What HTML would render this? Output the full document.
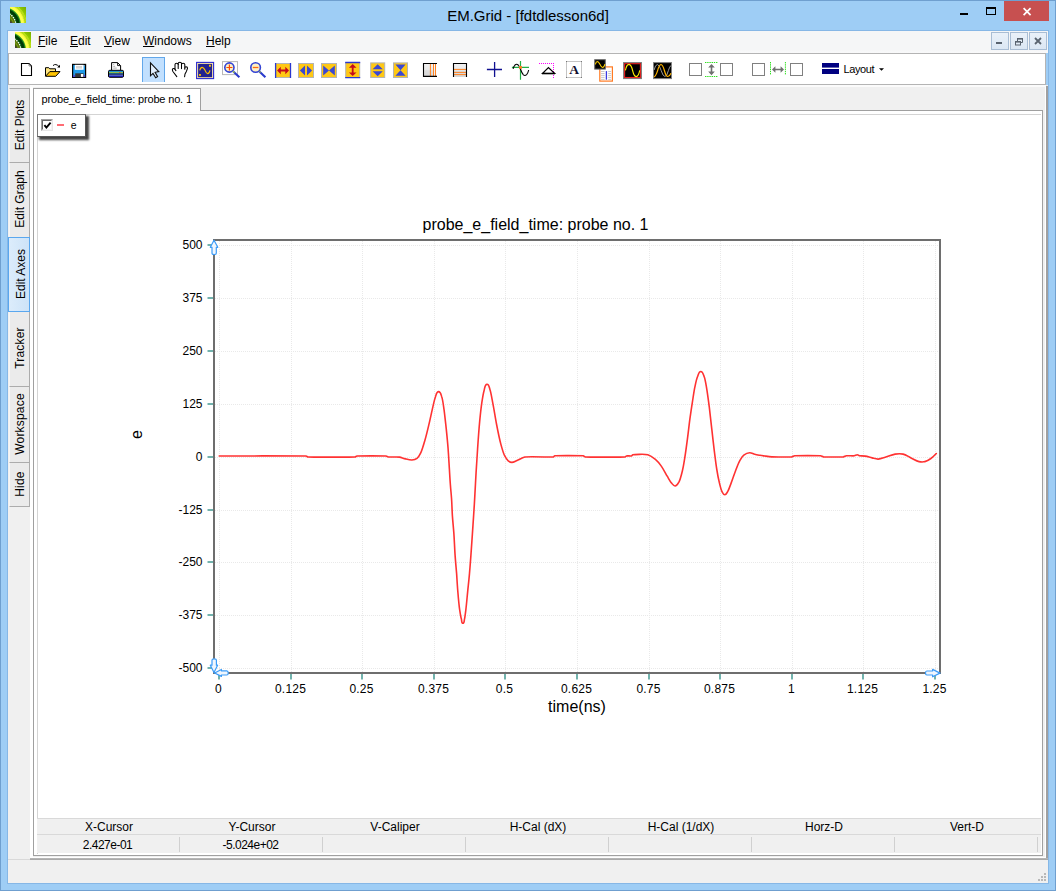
<!DOCTYPE html>
<html>
<head>
<meta charset="utf-8">
<title>EM.Grid - [fdtdlesson6d]</title>
<style>
html,body{margin:0;padding:0;}
body{width:1056px;height:891px;overflow:hidden;background:#9ecdf5;font-family:"Liberation Sans",sans-serif;position:relative;color:#000;}
.abs{position:absolute;}
#frame{position:absolute;left:0;top:0;width:1054px;height:889px;border:1px solid #6f9fcf;}
#title{position:absolute;left:0;top:6px;width:1056px;text-align:center;font-size:15px;line-height:20px;color:#000;}
#menubar{position:absolute;left:8px;top:31px;width:1040px;height:22px;background:linear-gradient(#f5f6f7 0%,#f5f6f7 85%,#f9f9fa 100%);}
.menu{position:absolute;top:34px;font-size:12px;line-height:15px;}
.menu u{text-decoration:underline;text-underline-offset:1px;}
#toolbar{position:absolute;left:8px;top:53px;width:1036px;height:30px;background:#fff;border:1px solid #b4b4b4;}
#client{position:absolute;left:8px;top:85px;width:1040px;height:774px;background:#f0f0f0;}
#status{position:absolute;left:8px;top:859px;width:1040px;height:24px;background:#f0f0f0;}
.vtab{position:absolute;left:9px;width:19px;border:1px solid #acacac;border-left-color:#f6f6f6;background:#ebebeb;}
.vtab span{position:absolute;left:50%;top:50%;transform:translate(-50%,-50%) translateY(-1px) rotate(-90deg);white-space:nowrap;font-size:12px;line-height:12px;letter-spacing:0;}
.vtab.sel{left:8px;width:20px;background:linear-gradient(90deg,#dcecfb,#cde3f8);border-color:#5aa7ee;z-index:3}
.vtab.sel span{margin-left:2px}
.hd,.vl{width:140px;text-align:center;font-size:12px;line-height:15px;white-space:nowrap}
.vl{letter-spacing:-0.5px;margin-top:1px}
.mdib{top:32px;width:18px;height:18px;box-sizing:border-box;border:1px solid #a9bdd4;background:linear-gradient(#eaf1f9,#dbe7f4)}
</style>
</head>
<body>
<div id="frame"></div>
<div class="abs" style="left:7px;top:30px;width:1040px;height:852px;border:1px solid #86b7e6"></div>
<div id="title">EM.Grid - [fdtdlesson6d]</div>


<!-- menu bar -->
<div id="menubar"></div>
<div class="menu" style="left:38px"><u>F</u>ile</div>
<div class="menu" style="left:70px"><u>E</u>dit</div>
<div class="menu" style="left:104px"><u>V</u>iew</div>
<div class="menu" style="left:143px"><u>W</u>indows</div>
<div class="menu" style="left:206px"><u>H</u>elp</div>


<!-- window controls -->
<div class="abs" style="left:1004px;top:1px;width:45px;height:20px;background:#c75050"></div>
<svg class="abs" style="left:1004px;top:1px" width="45" height="20" viewBox="0 0 45 20"><path d="M19.6,7.2 L26.6,14.2 M26.6,7.2 L19.6,14.2" stroke="#fff" stroke-width="1.7" fill="none"/></svg>
<div class="abs" style="left:986px;top:7px;width:10px;height:8px;box-sizing:border-box;border:1px solid #000;border-top-width:2px"></div>
<div class="abs" style="left:960px;top:13px;width:8px;height:2px;background:#000"></div>
<!-- mdi buttons -->
<div class="abs mdib" style="left:991px"></div>
<div class="abs mdib" style="left:1010px"></div>
<div class="abs mdib" style="left:1029px"></div>
<svg class="abs" style="left:991px;top:32px" width="56" height="18" viewBox="0 0 56 18">
<rect x="5" y="10" width="6" height="2" fill="#5a6470"/>
<path d="M26.5,9 V6.5 H31.5 V10.5 H29.5" fill="none" stroke="#5a6470" stroke-width="1"/><rect x="26" y="6" width="6" height="1.6" fill="#5a6470"/>
<rect x="24.5" y="9.5" width="5" height="3.5" fill="none" stroke="#5a6470" stroke-width="1"/><rect x="24" y="9" width="6" height="1.6" fill="#5a6470"/>
<path d="M44,6 L50,12 M50,6 L44,12" stroke="#5a6470" stroke-width="1.8" fill="none"/>
</svg>
<!-- size grip -->
<svg class="abs" style="left:1036px;top:871px;z-index:5" width="12" height="12" viewBox="0 0 12 12" shape-rendering="crispEdges" fill="#b8b8b8">
<rect x="8" y="2" width="2" height="2"/><rect x="5" y="5" width="2" height="2"/><rect x="8" y="5" width="2" height="2"/>
<rect x="2" y="8" width="2" height="2"/><rect x="5" y="8" width="2" height="2"/><rect x="8" y="8" width="2" height="2"/></svg>
<!-- app logos -->
<svg width="0" height="0" style="position:absolute"><defs>
<linearGradient id="lgBg" x1="0" y1="1" x2="1" y2="0"><stop offset="0" stop-color="#a8dc00"/><stop offset="0.7" stop-color="#98d000"/><stop offset="1" stop-color="#74ac00"/></linearGradient>
<clipPath id="lgClip"><rect x="0" y="0" width="16" height="16"/></clipPath>
<g id="logo" clip-path="url(#lgClip)">
<rect width="16" height="16" fill="url(#lgBg)"/>
<g fill="none" transform="translate(-7.1,18)">
<circle r="22.7" stroke="#c2ea18" stroke-width="2.2"/>
<circle r="19.8" stroke="#f2fc38" stroke-width="4.1"/>
<circle r="19.5" stroke="#ffff50" stroke-width="2.2"/>
<circle r="21.9" stroke="#98ac1c" stroke-width="0.45" stroke-dasharray="1.2,0.6"/>
<circle r="22.9" stroke="#90a818" stroke-width="0.45" stroke-dasharray="1.2,0.6"/>
<circle r="17.3" stroke="#2e9a2c" stroke-width="1.3"/>
<circle r="14.9" stroke="#075c10" stroke-width="4.4"/>
<circle r="15.4" stroke="#003a06" stroke-width="2.2"/>
<circle r="12.9" fill="#587808" stroke="none"/>
<circle r="10.6" stroke="#86a41e" stroke-width="0.8"/>
<circle r="8.4" stroke="#405e06" stroke-width="1.6"/>
<circle r="12.9" stroke="#fff" stroke-width="1.2" stroke-dasharray="1.4,1"/>
</g>
<rect x="0" y="14.7" width="2.2" height="1.3" fill="#483c44"/>
</g></defs></svg>
<svg class="abs" style="left:10px;top:7px" width="16" height="16" viewBox="0 0 16 16"><use href="#logo"/></svg>
<svg class="abs" style="left:15px;top:32px" width="16" height="16" viewBox="0 0 16 16"><use href="#logo"/></svg>
<!-- toolbar -->
<div id="toolbar"></div>

<!-- toolbar icons -->
<div class="abs" style="left:142px;top:57px;width:23px;height:25px;box-sizing:border-box;background:#c2e0fe;border:1px solid #62a7ea;border-bottom:none"></div>
<svg class="abs" style="left:0;top:0" width="1056" height="90" viewBox="0 0 1056 90">
<!-- new -->
<path d="M21.5,63.5 H29 L31.5,66 V75.5 H21.5 Z" fill="#fff" stroke="#000" stroke-width="1.1"/>
<path d="M29,63.8 V66 H31.3" fill="none" stroke="#888" stroke-width="0.9"/>
<!-- open -->
<path d="M45.5,76 V67.7 H48.8 L49.8,68.8 H55.5 V71.5" fill="#ffe680" stroke="#000" stroke-width="1"/>
<path d="M45.5,76.3 L49.8,71.6 H60 L55.7,76.3 Z" fill="#ffc400" stroke="#000" stroke-width="1"/>
<path d="M53,65.6 Q55.7,62.9 59.2,66.8" fill="none" stroke="#000" stroke-width="1"/>
<path d="M57.2,67.6 H60 V64.8 Z" fill="#000"/>
<!-- save -->
<rect x="72.6" y="64.4" width="13" height="13" fill="#1f9ae8" stroke="#000" stroke-width="1.2"/>
<rect x="73.2" y="75" width="2" height="2" fill="#4a48d8"/><rect x="83.4" y="75" width="1.8" height="2" fill="#4a48d8"/>
<rect x="74.8" y="64.8" width="8.8" height="5" fill="#fff"/>
<rect x="76" y="66" width="6" height="2.6" fill="#d4d4d4"/>
<rect x="75.2" y="73.3" width="8.4" height="3.9" fill="#363636"/>
<rect x="80.9" y="74" width="2.3" height="2.9" fill="#fff"/>
<rect x="84" y="65.2" width="1" height="1" fill="#999"/>
<!-- print -->
<path d="M111.6,70 V62.6 H117.6 L120.6,65.6 V70" fill="#fff" stroke="#000" stroke-width="1"/>
<path d="M117.6,62.8 V65.6 H120.4" fill="none" stroke="#000" stroke-width="0.9"/>
<path d="M113.2,64.5 H114.2 M113.2,66.3 H115.2 M113.2,68.1 H116.8" stroke="#999" stroke-width="0.8"/>
<rect x="108.5" y="70.3" width="15" height="7" rx="1.3" fill="#1a1a90" stroke="#000" stroke-width="1"/>
<rect x="109" y="70.9" width="14" height="0.8" fill="#1c8fe4"/>
<rect x="109" y="71.6" width="14" height="0.8" fill="#22d0d4"/>
<rect x="109" y="72.3" width="14" height="0.9" fill="#bfe426"/>
<rect x="119" y="72.2" width="1.6" height="1" fill="#ee3030"/>
<rect x="109" y="73.1" width="14" height="0.6" fill="#22c0d8"/>
<rect x="108.5" y="73.7" width="15" height="0.8" fill="#000"/>
<rect x="109" y="74.6" width="14" height="1.2" fill="#7088dc"/>
<rect x="109" y="75.8" width="14" height="1.2" fill="#1818a8"/>
<!-- pointer -->
<path d="M150.5,62.8 V75.8 L153,73.4 L155.7,77.8 L157.6,76.6 L155.1,72.3 L158.8,71.6 Z" fill="#e4f1ff" stroke="#111" stroke-width="1.1" stroke-linejoin="miter"/>
<!-- hand -->
<g fill="none" stroke="#000" stroke-width="1.05" stroke-linecap="round" stroke-linejoin="round">
<path d="M176.8,76.6 L172.9,71.5 Q171.8,69.6 172.8,68.7 Q173.9,68 175,69.2 L175,64.5 Q175,63.2 176.6,63.2 Q178.2,63.2 178.2,64.5 L178.2,63.6 Q178.2,62.3 179.85,62.3 Q181.5,62.3 181.5,63.6 L181.5,64.5 Q181.5,63.2 183.15,63.2 Q184.8,63.2 184.8,64.5 L184.8,67.9 Q184.8,66.7 186.2,66.7 Q187.6,66.8 187.5,68.3 L186.5,71.2 L185,74 L184.6,76.8"/>
<path d="M178.2,64.5 V68.4 M181.5,64.5 V68.6 M184.8,67.9 V69.2 M175,69.2 L175.9,70.6"/>
</g>
<!-- plot icon -->
<rect x="196.6" y="62.4" width="17" height="16.2" fill="#ffe9a6" stroke="#2a2ad2" stroke-width="1.1"/>
<rect x="198.1" y="63.9" width="14" height="13.3" fill="#222291"/>
<path d="M199.8,70.4 Q200.4,67.2 202.2,67.3 Q203.8,67.4 205.2,70.6 Q206.4,73.6 207.7,73.6 Q209.3,73.5 209.9,70.3" fill="none" stroke="#ffc000" stroke-width="1.2"/>
<rect x="209" y="64.8" width="1.9" height="1.9" fill="#ffc000"/><rect x="199" y="74" width="1.9" height="1.9" fill="#ffc000"/>
<!-- zoom in -->
<rect x="222.5" y="61.6" width="15" height="13" fill="none" stroke="#b8b8b8" stroke-width="1"/>
<path d="M233.3,71.6 L239.4,77.2" stroke="#2a3acc" stroke-width="2.1"/>
<path d="M232.8,71.1 L234.4,72.6" stroke="#b8e020" stroke-width="1.3"/>
<circle cx="229.4" cy="67.5" r="4.6" fill="#fdf0c4" stroke="#3444d4" stroke-width="1.6"/>
<path d="M226.4,67.5 H232.4 M229.4,64.5 V70.5" stroke="#ff4a00" stroke-width="1.2"/>
<!-- zoom out -->
<path d="M259.4,71.4 L265.4,77.2" stroke="#2a3acc" stroke-width="2.1"/>
<path d="M258.9,70.9 L260.5,72.4" stroke="#b8e020" stroke-width="1.3"/>
<circle cx="255.6" cy="67.5" r="4.8" fill="#fdf0c4" stroke="#3444d4" stroke-width="1.6"/>
<path d="M252.8,67.5 H258.4" stroke="#ff6a10" stroke-width="1.3"/>
<!-- A h-fit -->
<rect x="275.5" y="63.5" width="15" height="14" fill="#ffc814" stroke="#b4b4b4" stroke-width="1"/>
<path d="M275.6,63 V77.9 M290.5,63 V77.9" stroke="#2a38d0" stroke-width="1.3"/>
<path d="M277.1,70.5 L280.8,66.7 V69.6 H285.3 V66.7 L289,70.5 L285.3,74.3 V71.4 H280.8 V74.3 Z" fill="#c40a1c"/>
<!-- B h-expand -->
<rect x="298.5" y="63.5" width="15" height="14" fill="#ffc814" stroke="#b4b4b4" stroke-width="1"/>
<path d="M299.9,70.5 L305,65.4 V75.6 Z M312.1,70.5 L307,65.4 V75.6 Z" fill="#3a48d2"/>
<!-- C h-shrink -->
<rect x="321.5" y="63.5" width="15" height="14" fill="#ffc814" stroke="#b4b4b4" stroke-width="1"/>
<path d="M323.2,65.4 L329,70.5 L323.2,75.6 Z M334.8,65.4 L329,70.5 L334.8,75.6 Z" fill="#3a48d2"/>
<!-- D v-fit -->
<rect x="345.7" y="62.5" width="14" height="15" fill="#ffc814" stroke="#b4b4b4" stroke-width="1"/>
<path d="M345.2,62.5 H360.2 M345.2,77.6 H360.2" stroke="#2a38d0" stroke-width="1.3"/>
<path d="M352.7,64 L356.5,67.7 H353.6 V72.4 H356.5 L352.7,76.1 L348.9,72.4 H351.8 V67.7 H348.9 Z" fill="#c40a1c"/>
<!-- E v-expand -->
<rect x="370.7" y="62.9" width="14" height="14.6" fill="#ffc814" stroke="#b4b4b4" stroke-width="1"/>
<path d="M377.7,64.3 L382.8,69.3 H372.6 Z M377.7,76.2 L382.8,71.2 H372.6 Z" fill="#3a48d2"/>
<!-- F v-shrink -->
<rect x="393.5" y="62.9" width="14" height="14.6" fill="#ffc814" stroke="#b4b4b4" stroke-width="1"/>
<path d="M395.4,64.6 H405.6 L400.5,70.2 Z M395.4,75.8 H405.6 L400.5,70.2 Z" fill="#3a48d2"/>
<defs>
<linearGradient id="gG" x1="0" y1="0" x2="0" y2="1"><stop offset="0" stop-color="#f2f2f2"/><stop offset="0.5" stop-color="#e8e8e8"/><stop offset="0.55" stop-color="#dcdcdc"/><stop offset="1" stop-color="#d6d6d6"/></linearGradient>
<linearGradient id="gF" x1="0" y1="0" x2="1" y2="0"><stop offset="0" stop-color="#fff" stop-opacity="0"/><stop offset="0.6" stop-color="#fff" stop-opacity="0"/><stop offset="1" stop-color="#fff" stop-opacity="1"/></linearGradient>
</defs>
<!-- G vertical lines -->
<rect x="423.5" y="63.5" width="13.5" height="13" fill="url(#gG)"/>
<rect x="423.5" y="63.5" width="13.5" height="13" fill="url(#gF)"/>
<path d="M430.4,64 V76 M433.5,64 V76 M435.5,64 V76" stroke="#ff8222" stroke-width="1"/>
<path d="M437,63.5 H423.5 V76.4 H437" fill="none" stroke="#000" stroke-width="1.1"/>
<!-- H horizontal lines -->
<rect x="453.5" y="63.5" width="13" height="13.5" fill="url(#gG)"/>
<path d="M454,69.4 H466 M454,72.4 H466 M454,74.6 H466" stroke="#ff8222" stroke-width="1"/>
<path d="M453.5,77 V63.5 H466.5 V77" fill="none" stroke="#000" stroke-width="1.1"/>
<!-- I plus -->
<path d="M486.9,69.5 H502 M494.6,61.9 V77" stroke="#101090" stroke-width="1.3"/>
<!-- J tracker -->
<path d="M520.5,61 V79.7 M511.9,67.4 H529" stroke="#22b046" stroke-width="1.2"/>
<path d="M513.1,68.8 Q513.6,66.6 515,65 Q516.7,63.4 518.2,65 Q519.6,66.6 520.6,69.5 Q521.8,73 523.4,74.8 Q525,76.2 526.6,74.6 Q528,73 528.7,70" fill="none" stroke="#000" stroke-width="1.1"/>
<rect x="519.1" y="66" width="2.8" height="2.8" fill="#ff8020"/>
<!-- K delta -->
<path d="M539,63.5 H554" stroke="#ff00ff" stroke-width="1" stroke-dasharray="1,1" shape-rendering="crispEdges"/>
<path d="M553.5,63 V78" stroke="#ff00ff" stroke-width="1" stroke-dasharray="1,1" shape-rendering="crispEdges"/>
<path d="M548.4,67.6 L542.6,73.4 H554.6 Z" fill="none" stroke="#000" stroke-width="1.3" stroke-linejoin="miter"/>
<path d="M542,73.6 H555" stroke="#000" stroke-width="1.4"/>
<!-- L text -->
<rect x="566.5" y="61.5" width="15" height="16" fill="#fff" stroke="#c4c4c4" stroke-width="1"/>
<rect x="566" y="61" width="1" height="1" fill="#777"/><rect x="581" y="61" width="1" height="1" fill="#777"/><rect x="566" y="77" width="1" height="1" fill="#777"/><rect x="581" y="77" width="1" height="1" fill="#777"/>
<text x="574" y="73.8" font-family="Liberation Serif, serif" font-weight="bold" font-size="13.5" text-anchor="middle" fill="#101030">A</text>
<!-- M -->
<rect x="599.8" y="66.9" width="12.6" height="14.2" fill="#fff" stroke="#ff7a22" stroke-width="1.2"/>
<path d="M601,71.5 H604.6 M601,73.5 H604.6 M601,75.4 H604.6 M601,77.4 H604.6 M601,79.4 H604.6 M608.2,71.5 H611.1 M608.2,73.5 H611.1 M608.2,75.4 H611.1 M608.2,77.4 H611.1 M608.2,79.4 H611.1" stroke="#c4c4c4" stroke-width="0.9"/>
<path d="M606.4,71.1 V79.7" stroke="#3a3ae0" stroke-width="1.3"/>
<rect x="594.7" y="59.7" width="10.6" height="9.4" fill="#000" stroke="#6a6a6a" stroke-width="1"/>
<path d="M595.4,64.4 Q596,61.6 597.2,61.5 Q598.6,61.6 600,64.4 Q601.2,67.4 602.6,67.5 Q604,67.4 605,64.2" fill="none" stroke="#ffd000" stroke-width="1.1"/>
<!-- N -->
<rect x="623.5" y="62.6" width="18" height="16" fill="#000" stroke="#808080" stroke-width="1"/>
<rect x="624.6" y="63.7" width="15.8" height="13.8" fill="none" stroke="#e82222" stroke-width="1.1"/>
<path d="M625.4,70.4 Q626.6,64.4 629,64.4 Q631.2,64.6 632.6,70.5 Q634,76.4 636.2,76.6 Q638.6,76.4 639.7,70.4" fill="none" stroke="#ffee00" stroke-width="1.1"/>
<!-- O -->
<rect x="653.5" y="62.6" width="18" height="16" fill="#000" stroke="#808080" stroke-width="1"/>
<path d="M654.1,70 Q655.4,64.4 657.4,64.5 Q659.4,64.7 661.2,70.6 Q663,76.4 664.9,76.5 Q667,76.4 668.4,70.5 Q669.6,66.4 671,65.4" fill="none" stroke="#9a9a9a" stroke-width="1"/>
<path d="M654.1,76.9 Q656,75.8 657.6,70.6 Q659.2,64.6 661,64.5 Q662.8,64.6 664.4,70.5 Q666,76.4 667.8,76.5 Q669.6,76.4 671,73.3" fill="none" stroke="#ffb400" stroke-width="1.2"/>
<!-- boxes -->
<g fill="#fff" stroke="#808080" stroke-width="1">
<rect x="689.5" y="63.5" width="12" height="12"/><rect x="720.5" y="63.5" width="12" height="12"/>
<rect x="752.5" y="63.5" width="12" height="12"/><rect x="790.5" y="63.5" width="12" height="12"/>
</g>
<path d="M705,62.5 H718 M705,76.5 H718" stroke="#30e020" stroke-width="1" stroke-dasharray="1.4,0.8"/>
<path d="M711.5,64 L714.8,67.6 H712.3 V71.6 H714.8 L711.5,75.2 L708.2,71.6 H710.7 V67.6 H708.2 Z" fill="#707070"/>
<path d="M770.5,62 V75 M785.4,62 V75" stroke="#30e020" stroke-width="1" stroke-dasharray="1.4,0.8"/>
<path d="M772,69.5 L775.4,66.3 V68.8 H780.6 V66.3 L784,69.5 L780.6,72.7 V70.2 H775.4 V72.7 Z" fill="#707070"/>
<!-- layout -->
<rect x="822" y="63" width="17" height="4.6" fill="#000080"/><rect x="822" y="69" width="17" height="5" fill="#000080"/>
<text x="843.4" y="72.7" font-family="Liberation Sans, sans-serif" font-size="11" letter-spacing="-0.35" fill="#000">Layout</text>
<path d="M879,68.2 H884 L881.5,70.8 Z" fill="#000"/>

</svg>

<!-- client -->
<div id="client"></div>
<div id="status"></div>


<!-- tab control -->
<div class="abs" style="left:30px;top:85px;width:3px;height:773px;background:#fff"></div>
<div class="abs" style="left:30px;top:85px;width:1016px;height:2px;background:#fbfbfb"></div>
<div class="abs" style="left:33px;top:110px;width:1010px;height:746px;background:#fff;border:1px solid #a0a0a0;box-sizing:border-box"></div>
<div class="abs" style="left:31px;top:857px;width:1015px;height:1px;background:#fff"></div>
<div class="abs" style="left:30px;top:858px;width:1018px;height:2px;background:linear-gradient(#bcbcbc,#a2a2a2);z-index:4"></div>
<div class="abs" style="left:8px;top:859px;width:22px;height:1px;background:#d9d9d9;z-index:4"></div>
<div class="abs" style="left:1046px;top:86px;width:2px;height:773px;background:#a0a0a0"></div>
<div class="abs" style="left:1045px;top:87px;width:1px;height:771px;background:#fff"></div>
<!-- tab -->
<div class="abs" style="left:33px;top:88px;width:168px;height:23px;background:#fff;border:1px solid #a0a0a0;border-bottom:none;box-sizing:border-box"></div>
<div class="abs" style="left:41.5px;top:93px;font-size:11px;line-height:13px;letter-spacing:-0.16px;white-space:nowrap">probe_e_field_time: probe no. 1</div>
<!-- content window -->
<div class="abs" style="left:37px;top:114px;width:1004px;height:740px;background:#fff;border-top:1px solid #d4d4d4;border-left:1px solid #d4d4d4;box-sizing:border-box"></div>
<!-- cursor table -->
<div class="abs" style="left:37px;top:818px;width:1004px;height:35px;background:#f0f0f0;border-top:1px solid #d9d9d9;box-sizing:border-box"></div>
<div class="abs" style="left:37px;top:834px;width:1004px;height:1px;background:#d9d9d9"></div>
<div class="abs hd" style="left:39.0px;top:820px">X-Cursor</div>
<div class="abs vl" style="left:37.5px;top:837px">2.427e-01</div>
<div class="abs" style="left:179px;top:837px;width:1px;height:15px;background:#d0d0d0"></div>
<div class="abs hd" style="left:182.0px;top:820px">Y-Cursor</div>
<div class="abs vl" style="left:180.5px;top:837px">-5.024e+02</div>
<div class="abs" style="left:322px;top:837px;width:1px;height:15px;background:#d0d0d0"></div>
<div class="abs hd" style="left:325.0px;top:820px">V-Caliper</div>
<div class="abs" style="left:465px;top:837px;width:1px;height:15px;background:#d0d0d0"></div>
<div class="abs hd" style="left:468.0px;top:820px">H-Cal (dX)</div>
<div class="abs" style="left:608px;top:837px;width:1px;height:15px;background:#d0d0d0"></div>
<div class="abs hd" style="left:611.0px;top:820px">H-Cal (1/dX)</div>
<div class="abs" style="left:751px;top:837px;width:1px;height:15px;background:#d0d0d0"></div>
<div class="abs hd" style="left:754.0px;top:820px">Horz-D</div>
<div class="abs" style="left:894px;top:837px;width:1px;height:15px;background:#d0d0d0"></div>
<div class="abs hd" style="left:897.0px;top:820px">Vert-D</div>
<div class="abs" style="left:1037px;top:837px;width:1px;height:15px;background:#d0d0d0"></div>
<!-- legend -->
<div class="abs" style="left:37px;top:114px;width:49px;height:23px;background:#fff;border:1px solid #7a7a7a;border-right-color:#555;border-bottom-color:#555;box-sizing:border-box;box-shadow:2.5px 2.5px 2px 0.2px rgba(20,20,20,0.8)"></div>
<div class="abs" style="left:41px;top:119px;width:12px;height:12px;box-sizing:border-box;border:1px solid #a0a0a0;border-right-color:#e6e6e6;border-bottom-color:#e6e6e6;background:#fff"></div>
<div class="abs" style="left:42px;top:120px;width:10px;height:10px;box-sizing:border-box;border:1px solid #696969;border-right-color:#f4f4f4;border-bottom-color:#f4f4f4;background:#fff"></div>
<svg class="abs" style="left:41px;top:119px" width="12" height="12" viewBox="0 0 12 12"><path d="M3.4,6.2 L5.4,8.5 L9.6,3.6" fill="none" stroke="#000" stroke-width="1.9"/></svg>
<div class="abs" style="left:57.4px;top:124px;width:6.8px;height:2px;background:#ff6c74"></div>
<div class="abs" style="left:70.7px;top:118px;font-size:10.5px;line-height:14px">e</div>
<svg class="abs" style="left:0;top:0" width="1056" height="891" viewBox="0 0 1056 891">
<g stroke="#e9e9e9" stroke-width="1" stroke-dasharray="1,1" shape-rendering="crispEdges">
<line x1="219.5" y1="241" x2="219.5" y2="672"/>
<line x1="291.5" y1="241" x2="291.5" y2="672"/>
<line x1="362.5" y1="241" x2="362.5" y2="672"/>
<line x1="434.5" y1="241" x2="434.5" y2="672"/>
<line x1="505.5" y1="241" x2="505.5" y2="672"/>
<line x1="577.5" y1="241" x2="577.5" y2="672"/>
<line x1="649.5" y1="241" x2="649.5" y2="672"/>
<line x1="720.5" y1="241" x2="720.5" y2="672"/>
<line x1="792.5" y1="241" x2="792.5" y2="672"/>
<line x1="863.5" y1="241" x2="863.5" y2="672"/>
<line x1="935.5" y1="241" x2="935.5" y2="672"/>
<line x1="215" y1="245.5" x2="939" y2="245.5"/>
<line x1="215" y1="298.5" x2="939" y2="298.5"/>
<line x1="215" y1="351.5" x2="939" y2="351.5"/>
<line x1="215" y1="404.5" x2="939" y2="404.5"/>
<line x1="215" y1="457.5" x2="939" y2="457.5"/>
<line x1="215" y1="510.5" x2="939" y2="510.5"/>
<line x1="215" y1="562.5" x2="939" y2="562.5"/>
<line x1="215" y1="615.5" x2="939" y2="615.5"/>
<line x1="215" y1="668.5" x2="939" y2="668.5"/>
</g>
<g stroke="#62aaa4" stroke-width="1.8">
<line x1="219" y1="674" x2="219" y2="679.5"/>
<line x1="291" y1="674" x2="291" y2="679.5"/>
<line x1="362" y1="674" x2="362" y2="679.5"/>
<line x1="434" y1="674" x2="434" y2="679.5"/>
<line x1="505" y1="674" x2="505" y2="679.5"/>
<line x1="577" y1="674" x2="577" y2="679.5"/>
<line x1="649" y1="674" x2="649" y2="679.5"/>
<line x1="720" y1="674" x2="720" y2="679.5"/>
<line x1="792" y1="674" x2="792" y2="679.5"/>
<line x1="863" y1="674" x2="863" y2="679.5"/>
<line x1="935" y1="674" x2="935" y2="679.5"/>
<line x1="207.5" y1="245" x2="213" y2="245"/>
<line x1="207.5" y1="298" x2="213" y2="298"/>
<line x1="207.5" y1="351" x2="213" y2="351"/>
<line x1="207.5" y1="404" x2="213" y2="404"/>
<line x1="207.5" y1="457" x2="213" y2="457"/>
<line x1="207.5" y1="510" x2="213" y2="510"/>
<line x1="207.5" y1="562" x2="213" y2="562"/>
<line x1="207.5" y1="615" x2="213" y2="615"/>
<line x1="207.5" y1="668" x2="213" y2="668"/>
</g>
<rect x="214" y="240" width="726" height="433" fill="none" stroke="#6e6e6e" stroke-width="2"/>
<path d="M219.2,456.0 C219.2,456.0 305.1,455.8 306.0,456.0 C306.7,456.2 307.3,456.8 308.0,457.0 C308.9,457.2 354.1,457.2 355.0,457.0 C355.7,456.8 356.3,456.2 357.0,456.0 C357.9,455.8 385.0,455.8 386.0,456.0 C386.8,456.2 387.5,456.8 388.3,457.0 C389.3,457.2 397.4,456.8 399.5,457.1 C401.3,457.4 402.9,458.2 404.6,458.6 C406.7,459.1 409.8,460.1 411.9,460.0 C413.7,459.9 415.6,459.4 417.0,458.3 C418.7,457.1 419.7,455.1 420.6,453.2 C421.7,451.0 423.7,444.5 425.0,440.0 C426.4,435.2 427.5,430.3 428.7,425.4 C430.0,420.1 431.2,414.1 432.3,409.4 C433.2,405.5 434.2,400.3 435.2,397.7 C436.1,395.5 436.3,391.6 438.6,391.6 C440.7,391.6 441.1,395.0 441.8,397.0 C442.7,399.4 443.4,405.2 444.0,409.4 C444.7,414.4 445.5,422.1 446.2,428.4 C446.9,435.2 447.6,442.0 448.1,448.8 C448.6,455.6 449.0,462.9 449.4,469.2 C449.7,474.5 450.0,479.8 450.4,485.0 C450.7,489.3 451.2,493.7 451.5,498.0 C451.9,503.2 452.0,509.9 452.4,515.9 C452.8,521.9 453.5,527.9 453.9,533.9 C454.4,541.1 454.6,548.2 455.1,555.4 C455.5,561.4 456.1,567.4 456.6,573.4 C457.0,579.4 457.3,585.3 457.8,591.3 C458.3,597.3 459.0,605.4 459.6,609.3 C460.1,612.6 460.9,617.4 461.4,619.1 C461.8,620.5 461.4,623.3 462.9,623.3 C464.4,623.3 464.1,620.6 464.5,619.1 C464.9,617.4 465.5,612.6 465.9,609.3 C466.4,605.4 467.1,597.3 467.7,591.3 C468.3,585.3 469.0,579.4 469.5,573.4 C470.0,567.4 470.5,561.4 470.9,555.4 C471.4,548.2 471.9,541.1 472.4,533.9 C472.8,527.9 473.2,521.9 473.6,515.9 C474.1,508.7 474.5,501.6 474.9,494.4 C475.3,487.0 475.7,479.5 476.1,472.1 C476.6,464.3 477.1,456.6 477.6,448.8 C478.2,439.6 479.0,428.7 479.7,421.1 C480.3,414.8 481.2,406.8 481.9,402.1 C482.5,398.2 483.3,393.0 484.1,390.4 C484.8,388.3 484.7,384.4 487.0,384.3 C489.1,384.2 489.3,387.8 490.0,389.7 C490.9,392.0 492.0,399.0 492.9,403.6 C494.0,409.2 495.2,417.2 496.5,424.0 C497.8,430.8 499.7,439.9 500.9,444.4 C501.9,448.1 503.3,453.1 504.5,455.4 C505.5,457.4 507.0,459.8 508.2,460.8 C509.2,461.6 510.5,462.4 511.8,462.4 C513.4,462.5 515.3,461.2 517.0,460.5 C519.1,459.7 522.1,457.6 524.9,457.0 C528.3,456.3 552.6,457.3 553.3,457.0 C553.9,456.8 554.1,456.0 554.7,455.8 C555.4,455.5 582.3,455.6 583.2,455.8 C584.0,456.0 584.5,456.8 585.3,457.0 C586.2,457.2 624.3,457.2 625.0,457.0 C625.6,456.8 625.9,456.1 626.5,455.9 C627.2,455.7 630.7,456.1 631.4,455.9 C632.0,455.7 632.3,455.0 632.9,454.8 C633.6,454.6 644.4,453.8 647.8,454.8 C650.7,455.6 653.1,457.5 655.4,459.4 C657.7,461.3 659.6,463.7 661.3,466.1 C663.4,469.0 665.6,473.5 667.2,476.2 C668.6,478.5 670.1,481.4 671.4,482.9 C672.5,484.1 673.5,486.1 675.1,486.0 C676.9,485.9 678.0,483.7 678.9,482.1 C680.0,480.2 681.4,474.9 682.3,471.2 C683.4,466.8 684.1,462.2 684.8,457.7 C685.7,452.3 686.6,445.4 687.4,439.2 C688.3,432.4 689.0,425.6 689.9,418.9 C690.7,413.3 691.5,407.7 692.4,402.1 C693.2,397.0 694.0,391.0 694.9,386.9 C695.6,383.5 696.5,379.1 697.5,376.8 C698.3,374.9 698.7,371.5 700.8,371.5 C702.9,371.5 703.4,374.9 704.2,376.8 C705.2,379.1 706.0,384.6 706.7,388.6 C707.5,393.4 708.5,401.0 709.3,407.2 C710.2,414.5 711.0,421.8 711.8,429.1 C712.6,436.4 713.4,443.6 714.3,450.9 C715.1,457.1 715.9,464.1 716.8,469.5 C717.5,474.0 718.6,479.5 719.4,482.9 C720.1,485.8 721.1,489.9 721.9,491.4 C722.6,492.7 723.3,494.7 724.8,494.7 C726.3,494.7 727.0,492.7 727.8,491.4 C728.7,489.9 730.1,485.8 731.2,482.9 C732.5,479.5 733.9,475.1 735.4,471.2 C736.7,467.8 738.2,463.6 739.6,461.1 C740.8,459.0 741.9,456.7 743.8,455.2 C745.5,453.9 747.6,452.9 749.7,452.8 C751.4,452.7 753.0,453.9 754.7,454.3 C756.4,454.7 758.2,455.0 759.9,455.3 C761.6,455.6 763.3,455.8 765.0,456.0 C767.0,456.3 769.5,456.7 771.8,456.9 C774.5,457.1 790.4,457.1 791.7,456.9 C792.7,456.7 793.7,456.0 794.7,455.8 C796.0,455.6 819.2,455.6 820.5,455.8 C821.5,456.0 822.5,456.7 823.5,456.9 C824.8,457.1 842.1,457.1 843.4,456.9 C844.4,456.7 845.4,456.0 846.4,455.8 C847.7,455.6 853.1,456.0 854.3,455.8 C855.3,455.6 856.4,454.8 857.3,454.8 C858.0,454.8 858.6,455.5 859.3,455.7 C860.2,455.9 863.3,455.8 865.3,456.1 C867.6,456.5 869.9,457.4 872.2,457.9 C874.2,458.4 876.2,459.2 878.2,459.1 C880.6,459.0 882.9,458.0 885.2,457.3 C888.0,456.5 891.9,454.6 895.1,454.1 C897.7,453.7 900.5,453.5 903.1,454.1 C905.9,454.7 908.4,456.7 911.0,457.9 C913.7,459.2 916.7,461.1 919.0,461.6 C920.9,462.0 923.0,462.1 924.9,461.6 C927.1,461.1 929.1,459.8 930.9,458.5 C932.9,457.1 936.3,453.5 936.3,453.5" fill="none" stroke="#ff3232" stroke-width="1.6" stroke-linejoin="round" stroke-linecap="round"/>
<g font-family="Liberation Sans, sans-serif" font-size="12" fill="#000">
<text x="202.5" y="248.8" text-anchor="end">500</text>
<text x="202.5" y="301.8" text-anchor="end">375</text>
<text x="202.5" y="354.8" text-anchor="end">250</text>
<text x="202.5" y="407.8" text-anchor="end">125</text>
<text x="202.5" y="460.8" text-anchor="end">0</text>
<text x="202.5" y="513.8" text-anchor="end">-125</text>
<text x="202.5" y="565.8" text-anchor="end">-250</text>
<text x="202.5" y="618.8" text-anchor="end">-375</text>
<text x="202.5" y="671.8" text-anchor="end">-500</text>
<text x="218.5" y="692.5" text-anchor="middle" letter-spacing="0.2">0</text>
<text x="290.5" y="692.5" text-anchor="middle" letter-spacing="0.2">0.125</text>
<text x="361.5" y="692.5" text-anchor="middle" letter-spacing="0.2">0.25</text>
<text x="433.5" y="692.5" text-anchor="middle" letter-spacing="0.2">0.375</text>
<text x="504.5" y="692.5" text-anchor="middle" letter-spacing="0.2">0.5</text>
<text x="576.5" y="692.5" text-anchor="middle" letter-spacing="0.2">0.625</text>
<text x="648.5" y="692.5" text-anchor="middle" letter-spacing="0.2">0.75</text>
<text x="719.5" y="692.5" text-anchor="middle" letter-spacing="0.2">0.875</text>
<text x="791.5" y="692.5" text-anchor="middle" letter-spacing="0.2">1</text>
<text x="862.5" y="692.5" text-anchor="middle" letter-spacing="0.2">1.125</text>
<text x="934.5" y="692.5" text-anchor="middle" letter-spacing="0.2">1.25</text>
</g>
<g font-family="Liberation Sans, sans-serif" font-size="16" fill="#000">
<text x="535.5" y="229.8" text-anchor="middle">probe_e_field_time: probe no. 1</text>
<text x="577" y="711.5" text-anchor="middle">time(ns)</text>
<text transform="translate(142,434.5) rotate(-90)" text-anchor="middle">e</text>
</g>
<g fill="#f0f6fd" stroke="#3c9cf8" stroke-width="1.2" stroke-linejoin="round">
<path d="M214,240.2 L217.8,247.3 H216.3 V253.2 Q216.3,254.5 214.2,254.5 Q212,254.5 212,253.2 V247.3 H210.3 Z"/>
<path d="M214,672.6 L210.3,665.2 H212 V660 Q212,658.8 214.2,658.8 Q216.4,658.8 216.4,660 V665.2 H217.6 Z"/>
<path d="M214.6,673 L221.4,669.5 V670.8 H226.8 Q228.2,670.8 228.2,672.9 Q228.2,675 226.8,675 H221.4 V676.4 Z"/>
<path d="M940,673.1 L932.6,669.4 V671 H926.8 Q925.5,671 925.5,673 Q925.5,675 926.8,675 H932.6 V676.8 Z"/>
</g>
</svg>
<!-- vertical tabs -->
<div class="vtab" style="top:88px;height:73px"><span>Edit Plots</span></div>
<div class="vtab" style="top:162px;height:74px"><span>Edit Graph</span></div>
<div class="vtab sel" style="top:237px;height:73px"><span>Edit Axes</span></div>
<div class="vtab" style="top:311px;height:74px"><span style="letter-spacing:0.2px">Tracker</span></div>
<div class="vtab" style="top:386px;height:75px"><span style="letter-spacing:0.2px">Workspace</span></div>
<div class="vtab" style="top:462px;height:43px"><span style="letter-spacing:0.2px">Hide</span></div>

</body>
</html>
